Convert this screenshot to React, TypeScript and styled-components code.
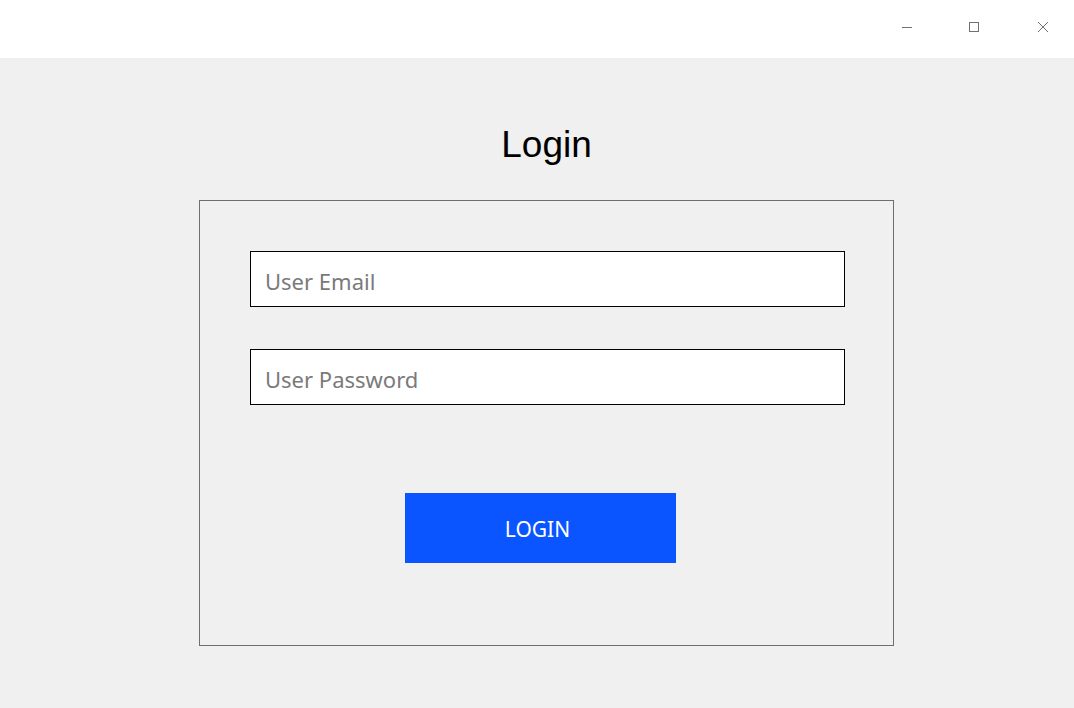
import React from 'react';
import styled, { createGlobalStyle } from 'styled-components';

const GlobalStyle = createGlobalStyle`
  html, body {
    margin: 0;
    padding: 0;
    background: #f0f0f0;
  }
  * {
    box-sizing: border-box;
  }
`;

const App: React.FC = () => {
  return (
    <Window>
      <GlobalStyle />
      <TitleBar>
        <WindowButton aria-label="Minimize">
          <svg width="12" height="12" viewBox="0 0 12 12">
            <path d="M1 6.5h10" stroke="#707070" strokeWidth="1" />
          </svg>
        </WindowButton>
        <WindowButton aria-label="Maximize" $offset={1}>
          <svg width="12" height="12" viewBox="0 0 12 12">
            <rect x="1.5" y="1.5" width="9" height="9" fill="none" stroke="#707070" strokeWidth="1" />
          </svg>
        </WindowButton>
        <WindowButton aria-label="Close" $offset={4}>
          <svg width="12" height="12" viewBox="0 0 12 12">
            <path d="M1 1l10 10M11 1L1 11" stroke="#707070" strokeWidth="1" />
          </svg>
        </WindowButton>
      </TitleBar>

      <Content>
        <Title>Login</Title>
        <Card>
          <Field placeholder="User Email" type="email" />
          <Field placeholder="User Password" type="password" />
          <ButtonRow>
            <LoginButton>LOGIN</LoginButton>
          </ButtonRow>
        </Card>
      </Content>
    </Window>
  );
};

// Styled components
const Window = styled.div`
  width: 1074px;
  height: 708px;
  background-color: #f0f0f0;
  display: flex;
  flex-direction: column;
  overflow: hidden;
`;

const TitleBar = styled.div`
  height: 58px;
  background-color: #ffffff;
  display: flex;
  justify-content: flex-end;
  align-items: flex-start;
`;

const WindowButton = styled.button<{ $offset?: number }>`
  width: 67px;
  height: 54px;
  border: none;
  background: transparent;
  display: flex;
  align-items: center;
  justify-content: center;
  padding: 0 0 0 ${(p) => p.$offset ?? 0}px;
  cursor: default;
`;

const Content = styled.div`
  width: 695px;
  margin-left: 199px;
  display: flex;
  flex-direction: column;
`;

const Title = styled.h1`
  margin: 66px 0 0;
  height: 76px;
  font-family: 'Liberation Sans', Arial, sans-serif;
  font-size: 37px;
  font-weight: 400;
  line-height: 42px;
  color: #000;
  text-align: center;
`;

const Card = styled.div`
  height: 446px;
  border: 1px solid #6e6e6e;
  padding: 50px 47px 0 50px;
  display: flex;
  flex-direction: column;
  gap: 42px;
`;

const Field = styled.input`
  width: 595px;
  height: 56px;
  border: 1px solid #000;
  background: #fff;
  padding: 3px 14px 0;
  font-family: 'Noto Sans', 'Open Sans', sans-serif;
  font-size: 22px;
  color: #000;
  outline: none;

  &::placeholder {
    color: #7a7a7a;
  }
`;

const ButtonRow = styled.div`
  display: flex;
  padding-left: 155px;
  margin-top: 46px;
`;

const LoginButton = styled.button`
  width: 271px;
  height: 70px;
  border: none;
  background-color: #0a55ff;
  color: #fff;
  padding: 2px 6px 0 0;
  font-family: 'Noto Sans', 'Open Sans', sans-serif;
  font-size: 21px;
  cursor: pointer;
`;

export default App;
